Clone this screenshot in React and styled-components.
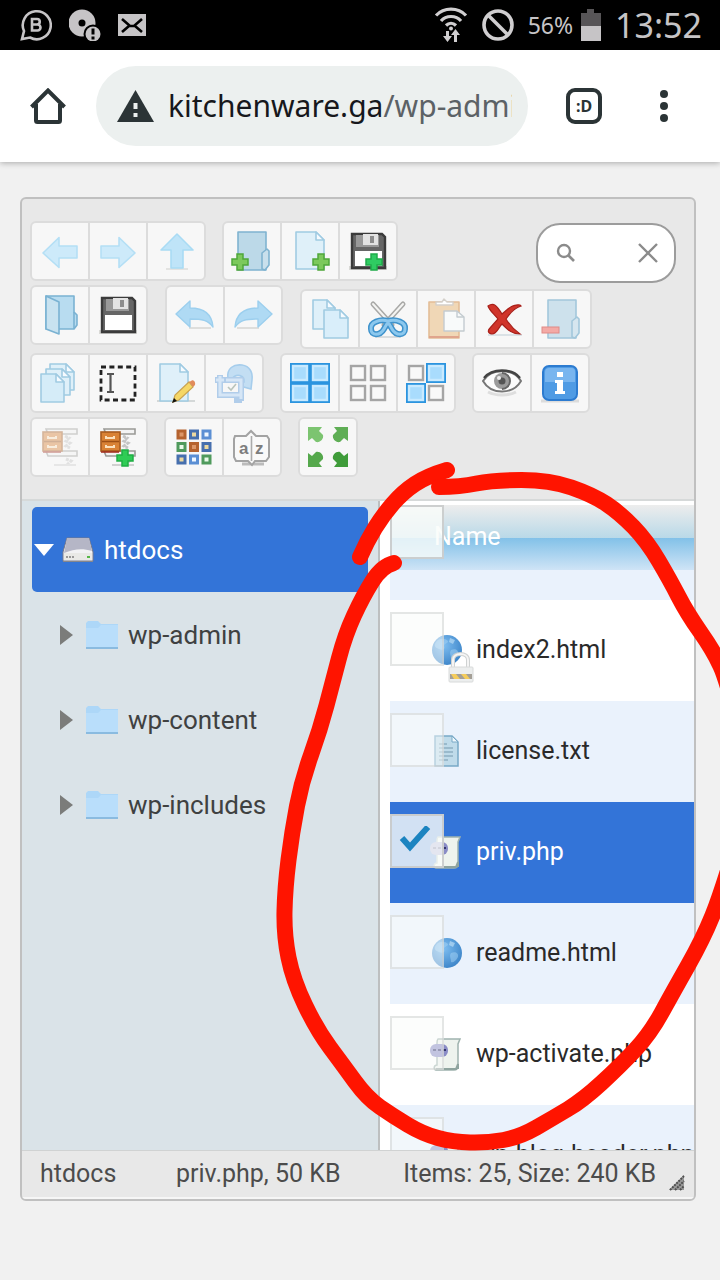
import React, { useState } from "react";
import styled, { createGlobalStyle } from "styled-components";

const GlobalStyle = createGlobalStyle`
  *, *::before, *::after { box-sizing: border-box; }
  html, body { margin: 0; padding: 0; }
  body { background: #f1f1f1; font-family: Roboto, "Liberation Sans", sans-serif; }
  button, input { font: inherit; margin: 0; padding: 0; }
`;

/* ---------- page shell ---------- */

const Screen = styled.div`
  display: flex;
  flex-direction: column;
  height: 100vh;
  overflow: hidden;
  position: relative;
`;

const StatusBar = styled.div`
  flex: none;
  display: flex;
  align-items: center;
  gap: 16px;
  height: 50px;
  padding: 0 18px 0 20px;
  background: #000;
  color: #c6c4c6;
  font-family: "Noto Sans", Roboto, sans-serif;
  svg { display: block; flex: none; }
`;

const StatusSide = styled.div`
  display: flex;
  align-items: center;
  gap: ${(p) => p.$gap}px;
  margin-left: ${(p) => (p.$end ? "auto" : "0")};
`;

const Percent = styled.span`
  font-size: 23px;
  line-height: 50px;
  margin-right: -6px;
`;

const Clock = styled.time`
  font-size: 34px;
  line-height: 50px;
`;

const BrowserBar = styled.header`
  flex: none;
  display: flex;
  align-items: center;
  height: 112px;
  padding: 0 32px 0 24px;
  background: #fff;
  box-shadow: 0 1px 6px rgba(0, 0, 0, 0.3);
  position: relative;
`;

const BarButton = styled.button`
  flex: none;
  display: grid;
  place-items: center;
  width: 48px;
  height: 80px;
  border: 0;
  background: none;
  color: #2b3436;
`;

const Address = styled.button`
  flex: 1;
  min-width: 0;
  display: flex;
  align-items: center;
  gap: 14px;
  height: 80px;
  margin: 0 32px 0 24px;
  padding: 0 16px 0 21px;
  border: 0;
  border-radius: 40px;
  background: #ecf0ef;
  color: #17181c;
  text-align: left;
  svg { flex: none; }
`;

const Url = styled.span`
  flex: 1;
  min-width: 0;
  overflow: hidden;
  white-space: nowrap;
  font-family: "Noto Sans", Roboto, sans-serif;
  font-size: 30px;
  line-height: 48px;
`;

const UrlPath = styled.span`
  color: #5c6266;
`;

const TabCount = styled.span`
  display: grid;
  place-items: center;
  width: 36px;
  height: 36px;
  border: 4px solid #2b3436;
  border-radius: 9px;
  font-family: "Noto Sans", sans-serif;
  font-size: 16px;
  font-weight: 700;
  line-height: 20px;
`;

const MenuButton = styled(BarButton)`
  margin-left: 32px;
`;

const Page = styled.main`
  flex: 1;
  min-height: 0;
  display: flex;
  padding: 35px 24px 79px 20px;
  background: #f1f1f1;
`;

/* ---------- file manager ---------- */

const Manager = styled.section`
  flex: 1;
  min-width: 0;
  display: flex;
  flex-direction: column;
  border: 2px solid #c0c0c0;
  border-radius: 6px;
  background: #e8e8e8;
  overflow: hidden;
`;

const Toolbar = styled.div`
  flex: none;
  display: flex;
  flex-direction: column;
  gap: 4px;
  padding: 22px 18px 22px 8px;
  border-bottom: 2px solid #d6d9d9;
`;

const ToolRow = styled.div`
  display: flex;
  align-items: flex-start;
  gap: ${(p) => p.$gap || 16}px;
`;

const ToolGroup = styled.div`
  display: flex;
  gap: 2px;
  border: 2px solid #dcdcdc;
  border-radius: 6px;
  background: #dcdcdc;
  overflow: hidden;
  margin-top: ${(p) => (p.$low ? 4 : 0)}px;
`;

const ToolButton = styled.button`
  display: grid;
  place-items: center;
  width: 56px;
  height: 56px;
  border: 0;
  background: #f7f7f7;
  svg { display: block; overflow: visible; }
`;

const SearchBox = styled.label`
  display: flex;
  align-items: center;
  width: 140px;
  height: 60px;
  margin: 2px 0 -2px auto;
  padding: 0 14px 0 18px;
  border: 2px solid #9c9c9c;
  border-radius: 24px;
  background: #fff;
`;

const SearchInput = styled.input`
  flex: 1;
  min-width: 0;
  border: 0;
  outline: 0;
  background: none;
  font-size: 26px;
`;

const ClearButton = styled.button`
  flex: none;
  display: grid;
  place-items: center;
  width: 24px;
  height: 24px;
  border: 0;
  background: none;
`;

const WorkZone = styled.div`
  flex: 1;
  min-height: 0;
  display: grid;
  grid-template-columns: minmax(0, 358fr) minmax(0, 314fr);
`;

const Tree = styled.nav`
  padding: 6px 10px;
  border-right: 2px solid #bdbfc0;
  background: #dae3e8;
  overflow: hidden;
`;

const TreeItem = styled.a`
  display: flex;
  align-items: center;
  height: 85px;
  padding-left: ${(p) => (p.$root ? 1 : 26)}px;
  border-radius: 5px;
  background: ${(p) => (p.$root ? "#3374d8" : "transparent")};
  color: ${(p) => (p.$root ? "#fff" : "#3f4141")};
  font-size: 26px;
  line-height: 32px;
  text-decoration: none;
  svg { flex: none; }
`;

const Twisty = styled.svg`
  margin-right: ${(p) => p.$space}px;
`;

const TreeName = styled.span`
  margin-left: 10px;
`;

const FilePane = styled.div`
  min-width: 0;
  padding: 4px 0 0 10px;
  background: #fff;
  overflow: hidden;
`;

const FileTable = styled.table`
  width: 100%;
  table-layout: fixed;
  border-collapse: collapse;
  font-size: 25px;
  line-height: 32px;
`;

const HeadCell = styled.th`
  position: relative;
  height: 95px;
  padding: 0;
  vertical-align: top;
  background: #eaf2fc;
  color: #fff;
  font-weight: 400;
  text-align: left;
`;

const HeadBand = styled.div`
  height: 65px;
  padding: 16px 0 0 44px;
  background: linear-gradient(#ededed 0, #b9d9e8 33px, #82c1e8 33px, #cfe4f6 65px);
`;

const FileRow = styled.tr`
  background: ${(p) => (p.$selected ? "#3374d8" : p.$striped ? "#eaf2fc" : "#fff")};
  color: ${(p) => (p.$selected ? "#fff" : "#2a2a2a")};
`;

const FileCell = styled.td`
  position: relative;
  height: 101px;
  padding: 0;
`;

const FileEntry = styled.div`
  display: flex;
  align-items: center;
  gap: 14px;
  padding: 0 0 2px 40px;
  white-space: nowrap;
  svg { flex: none; overflow: visible; }
`;

const Tick = styled.label`
  position: absolute;
  left: 0;
  top: ${(p) => (p.$head ? 0 : 12)}px;
  display: grid;
  place-items: center;
  width: 54px;
  height: 54px;
  svg { grid-area: 1 / 1; pointer-events: none; }
`;

const TickInput = styled.input`
  appearance: none;
  grid-area: 1 / 1;
  width: 54px;
  height: 54px;
  border: 2px solid rgba(200, 202, 202, ${(p) => (p.$strong ? 0.9 : 0.45)});
  background: rgba(250, 252, 250, ${(p) => (p.$strong ? 0.8 : 0.5)});
`;

const Footer = styled.footer`
  flex: none;
  display: flex;
  align-items: center;
  gap: 12px;
  height: 49px;
  padding: 0 8px 0 18px;
  border-top: 1px solid #d0d2d2;
  border-bottom: 2px solid #f6f6f6;
  color: #4c4c4c;
  font-size: 25px;
  line-height: 32px;
  white-space: nowrap;
`;

const FootPath = styled.span`
  width: 124px;
`;

const FootSelection = styled.span`
  flex: 1;
`;

const Grip = styled.svg`
  align-self: flex-end;
  margin-bottom: 6px;
`;

const Annotation = styled.svg`
  position: absolute;
  inset: 0;
  width: 100%;
  height: 100%;
  pointer-events: none;
`;

/* ---------- pictograms, drawn on a 40 x 40 grid ---------- */

const Plus = ({ x, y, c = "#7cc95c", s = "#4fa73a" }) => (
  <path
    d={`M${x - 3} ${y - 8}h6v5h5v6h-5v5h-6v-5h-5v-6h5z`}
    fill={c}
    stroke={s}
    strokeWidth="1.5"
  />
);

const Sheet = ({ x = 5, y = 0, w = 30, h = 39, f = "#dff0f9" }) => (
  <g stroke="#a0cbe2" strokeWidth="1.6" strokeLinejoin="round">
    <path d={`M${x + 1} ${y + 1}h${w - 10}l8 8v${h - 10}h-${w - 2}z`} fill={f} />
    <path d={`M${x + w - 9} ${y + 1}v8h8z`} fill="#f6fbff" />
  </g>
);

const FolderBack = () => (
  <g stroke="#7fb3d0" strokeWidth="1.6" strokeLinejoin="round">
    <path d="M6 1h28v38H6z" fill="#bcd9e8" />
    <path d="M30 38V22l5-4 2 2v14l-4 5z" fill="#c9e0ec" />
  </g>
);

const Floppy = () => (
  <g>
    <rect x="1" y="35" width="38" height="4" fill="#d9d9d6" />
    <path d="M4 3h30l3 3v31H4z" fill="#666" stroke="#3b3b3b" strokeWidth="2.4" />
    <rect x="8" y="4" width="23" height="12" fill="#999" />
    <path d="M15 3h15v11H15z" fill="#e3e3e3" />
    <path d="M22 5h4v7h-4z" fill="#8d8d8d" />
    <path d="M7 20h27v15H7z" fill="#fff" />
  </g>
);

const Cabinet = () => (
  <g>
    <path d="M6 2h31v5H8zM6 24h31v5H8z" fill="#f3f3f3" stroke="#9a9a97" strokeWidth="1.6" />
    <path d="M25 9l4 2-3 3 4 2-4 3 4 2M26 32l5 2-4 4" fill="none" stroke="#c4c4c4" strokeWidth="3" strokeDasharray="3 1" />
    <path d="M14 38h22" stroke="#d0d0d0" strokeWidth="2" />
    <rect x="3" y="5" width="19" height="19" fill="#d98235" stroke="#a75a1e" strokeWidth="1.6" />
    <path d="M4 14.500h17" stroke="#9c4f16" strokeWidth="1.6" />
    <path d="M8 9v2h8V9M8 18v2h8v-2" fill="none" stroke="#fbe0bd" strokeWidth="2" />
    <path d="M3 25h18" stroke="#a02818" strokeWidth="1.6" />
  </g>
);

const Tile = ({ x, y, on }) => (
  <g>
    {on && <rect x={x} y={y} width="20" height="20" fill="#2b94df" />}
    <rect
      x={x + 3}
      y={y + 3}
      width="14"
      height="14"
      fill={on ? "#a9dcfd" : "#f9f9f9"}
      stroke={on ? "#c9eaff" : "#a5a5a5"}
      strokeWidth="2.4"
    />
  </g>
);

const gridColors = [
  ["#b5632f", "#dd9768"], ["#466fae", "#ecd9a0"], ["#5b8fd4", "#f0f8ff"],
  ["#4f9a5c", "#eafaea"], ["#b5632f", "#dd9768"], ["#466fae", "#ecd9a0"],
  ["#466fae", "#ecd9a0"], ["#5b8fd4", "#f0f8ff"], ["#4f9a5c", "#eafaea"],
];

const art = {
  back: <path d="M3 22L19 6.500V15h18v12H19v9.500z" fill="#cdeafa" stroke="#b4dff5" strokeWidth="1.6" strokeLinejoin="round" />,
  forward: <path d="M37 22L21 6.500V15H3v12h18v9.500z" fill="#cdeafa" stroke="#b4dff5" strokeWidth="1.6" strokeLinejoin="round" />,
  up: (
    <g>
      <path d="M10 38h22" stroke="#e3e3e1" strokeWidth="2" />
      <path d="M21 3l16 16H27v18H15V19H5z" fill="#bfe4f8" stroke="#a9dbf4" strokeWidth="1.6" strokeLinejoin="round" />
    </g>
  ),
  mkdir: <g><FolderBack /><Plus x={8} y={31} /></g>,
  mkfile: <g><Sheet /><Plus x={31} y={31} /></g>,
  saveas: <g><Floppy /><Plus x={26} y={31} c="#2fcc62" s="#1faa4a" /></g>,
  save: <Floppy />,
  open: (
    <g stroke="#7ab2d2" strokeWidth="1.6" strokeLinejoin="round">
      <path d="M6 1h28v16l3 3v10l-3 4H6z" fill="#b8dcf0" />
      <path d="M6 1l13 6v32L6 34z" fill="#c8e2f0" />
      <path d="M34 17v17" fill="none" />
    </g>
  ),
  undo: (
    <g>
      <path d="M14 33h22" stroke="#dededc" strokeWidth="2" />
      <path d="M1 19L15 6v7c14 0 22 6 23 19-5-7-11-8-23-8v8z" fill="#afdaf4" stroke="#9ccfee" strokeWidth="1.4" strokeLinejoin="round" />
    </g>
  ),
  redo: (
    <g>
      <path d="M4 33h22" stroke="#dededc" strokeWidth="2" />
      <path d="M39 19L25 6v7C11 13 3 19 2 32c5-7 11-8 23-8v8z" fill="#afdaf4" stroke="#9ccfee" strokeWidth="1.4" strokeLinejoin="round" />
    </g>
  ),
  copy: <g><Sheet x={2} y={0} w={24} h={31} /><Sheet x={13} y={10} w={26} h={30} f="#d9eefa" /></g>,
  cut: (
    <g fill="none" strokeLinecap="round">
      <path d="M5 5l19 21M35 5L16 26" stroke="#a9a9a7" strokeWidth="5" />
      <path d="M5 5l19 21M35 5L16 26" stroke="#f4f4f2" strokeWidth="2" />
      <path d="M8 38h24" stroke="#d8dcde" strokeWidth="2" />
      <path d="M20 22C12 20 2 23 3 30c0 7 9 7 13 0l4-7M20 22c8-2 18 1 17 8 0 7-9 7-13 0l-4-7" stroke="#3f93cc" strokeWidth="6" />
      <path d="M20 22C12 20 2 23 3 30c0 7 9 7 13 0l4-7M20 22c8-2 18 1 17 8 0 7-9 7-13 0l-4-7" stroke="#8cc8ee" strokeWidth="3" />
    </g>
  ),
  paste: (
    <g strokeLinejoin="round">
      <path d="M3 3h30v36H3z" fill="#f0d7b6" stroke="#e3bd97" strokeWidth="1.6" />
      <path d="M3 38h30" stroke="#e0a58d" strokeWidth="2" />
      <path d="M10 6V3h6l2-3 3 3h6v3z" fill="#fff" stroke="#d4d0ca" strokeWidth="1.4" />
      <path d="M18 12h13l7 6v14H18z" fill="#f8fafa" stroke="#c3cbd0" strokeWidth="1.4" />
      <path d="M31 12v6h7" fill="none" stroke="#c3cbd0" strokeWidth="1.4" />
    </g>
  ),
  remove: (
    <g>
      <path d="M4 36h34" stroke="#dbe2e6" strokeWidth="2" />
      <path d="M4 7c6-4 9 0 14 8C24 10 28 5 36 6l1 1C30 9 26 14 22 20c3 5 7 10 14 15-8 0-12-4-18-10-4 4-5 10-10 10-5-1-4-4-2-6l8-9C10 15 5 11 4 7z" fill="#d0342a" stroke="#a8201a" strokeWidth="1.2" />
    </g>
  ),
  empty: (
    <g>
      <g opacity=".7"><FolderBack /></g>
      <rect x="0" y="28" width="17" height="6" fill="#f3aaa6" stroke="#e08a86" />
    </g>
  ),
  duplicate: <g><Sheet x={9} y={0} w={26} h={28} /><Sheet x={5} y={5} w={26} h={28} /><Sheet x={0} y={10} w={25} h={30} f="#d5ecf8" /></g>,
  rename: (
    <g fill="none" stroke="#222">
      <rect x="3" y="4" width="34" height="33" strokeWidth="2.8" strokeDasharray="5 3.400" />
      <path d="M9 11h7M9 29h7M12.500 11v18" stroke="#555" strokeWidth="2.2" />
    </g>
  ),
  edit: (
    <g>
      <path d="M1 38h38" stroke="#d4d8d8" strokeWidth="2" />
      <Sheet x={3} w={30} />
      <path d="M17 39l2-7 14-13 4 5-14 13z" fill="#f5d766" stroke="#c9a352" strokeWidth="1.2" />
      <path d="M33 19l4 5 2-2c1-3-2-6-4-4z" fill="#e18b5b" />
      <path d="M16 40l2-5 3 3z" fill="#111" />
    </g>
  ),
  resize: (
    <g fill="none">
      <path d="M14 16C12 5 20 1 28 2c8 1 11 8 10 15l-1 9-11-3 4-4c1-7-8-9-12-3z" fill="#c3def3" stroke="#a6cdec" strokeWidth="1.6" />
      <path d="M1 17h10M6 12v20h24M11 17h16v21M20 37h8" stroke="#b1cdea" strokeWidth="6" />
      <path d="M2 17h8M6 13v19h22M12 17h15v19" stroke="#d6e6f6" strokeWidth="3" />
      <path d="M14 24l3 3 5-6" stroke="#b9c4bc" strokeWidth="1.6" />
    </g>
  ),
  selectall: <g><Tile x={0} y={0} on /><Tile x={20} y={0} on /><Tile x={0} y={20} on /><Tile x={20} y={20} on /></g>,
  selectnone: <g><Tile x={0} y={0} /><Tile x={20} y={0} /><Tile x={0} y={20} /><Tile x={20} y={20} /></g>,
  invert: <g><Tile x={0} y={0} /><Tile x={20} y={0} on /><Tile x={0} y={20} on /><Tile x={20} y={20} /></g>,
  preview: (
    <g>
      <path d="M6 29c8 4 20 4 28 0" fill="none" stroke="#dedede" strokeWidth="3" />
      <path d="M1 18C9 5 31 5 39 18c-8 14-30 14-38 0z" fill="#fcfcfc" stroke="#777" strokeWidth="2" />
      <path d="M2 15C10 5 30 5 38 15" fill="none" stroke="#444" strokeWidth="2.4" />
      <circle cx="20" cy="18" r="8" fill="#9b9b9b" />
      <path d="M20 10a8 8 0 0 1 0 16" fill="none" stroke="#666" strokeWidth="2" />
      <circle cx="20" cy="18" r="3.500" fill="#555" />
      <circle cx="17" cy="15" r="2" fill="#eee" />
    </g>
  ),
  info: (
    <g>
      <path d="M1 38h38" stroke="#dcdcdc" strokeWidth="3" />
      <rect x="3" y="3" width="34" height="34" rx="6" fill="#4f9be4" stroke="#2c7bd0" strokeWidth="2" />
      <path d="M5 9c0-3 2-4 4-4h22c3 0 4 1 4 4v10H5z" fill="#78b5ef" />
      <path d="M17 9h6v5h-6zM15 17h8v11h2v3H15v-3h2v-8h-2z" fill="#fff" />
    </g>
  ),
  extract: <g opacity=".42"><Cabinet /></g>,
  archive: <g><Cabinet /><Plus x={27} y={31} c="#2fcc55" s="#1fae44" /></g>,
  icons: (
    <g>
      {gridColors.map(([edge, core], i) => (
        <rect key={i} x={4 + (i % 3) * 12.5} y={4 + Math.floor(i / 3) * 12.5} width="7" height="7" fill={core} stroke={edge} strokeWidth="3" />
      ))}
    </g>
  ),
  sort: (
    <g>
      <path d="M10 37h22" stroke="#bbb" strokeWidth="3" />
      <path d="M3 9h11l5-5 5 5h11l2 3v18l-3 4H23l-3 4-4-4H4l-2-4V12z" fill="#f9f9f9" stroke="#a3a3a3" strokeWidth="2" />
      <path d="M19.500 9v25" stroke="#aaa" strokeWidth="1.600" />
      <text x="7" y="27" fontFamily="Liberation Sans, sans-serif" fontWeight="700" fontSize="17" fill="#7d7d7d">a</text>
      <text x="23" y="27" fontFamily="Liberation Sans, sans-serif" fontWeight="700" fontSize="17" fill="#7d7d7d">z</text>
    </g>
  ),
  fullscreen: (
    <g>
      <path d="M0 0h14l-3 4 4 4c1 4-3 8-7 7l-4-4-4 3z" fill="#7cc470" />
      <path d="M40 0H26l3 4-4 4c-1 4 3 8 7 7l4-4 4 3z" fill="#5fae55" />
      <path d="M0 40h14l-3-4 4-4c1-4-3-8-7-7l-4 4-4-3z" fill="#55a84c" />
      <path d="M40 40H26l3-4-4-4c-1-4 3-8 7-7l4 4 4-3z" fill="#3f9c3a" />
    </g>
  ),
};

const Tool = ({ name }) => (
  <ToolButton type="button" aria-label={name}>
    <svg width="40" height="40" viewBox="0 0 40 40" aria-hidden="true">{art[name]}</svg>
  </ToolButton>
);

const toolRows = [
  [["back", "forward", "up"], ["mkdir", "mkfile", "saveas"]],
  [["open", "save"], ["undo", "redo"], ["copy", "cut", "paste", "remove", "empty"]],
  [["duplicate", "rename", "edit", "resize"], ["selectall", "selectnone", "invert"], ["preview", "info"]],
  [["extract", "archive"], ["icons", "sort"], ["fullscreen"]],
];

/* ---------- file icons, drawn on a 32 x 32 grid ---------- */

const Globe = () => (
  <g>
    <circle cx="17" cy="16" r="15" fill="url(#sea)" />
    <path d="M6 8c3-4 9-4 12-1 0 3-4 2-4 5 2 3-2 5-5 3-3-1-6-3-3-7zM21 16c4-2 8 0 7 4-2 4-5 6-7 5 0-4-2-6 0-9z" fill="#a6d4f5" opacity=".5" />
    <path d="M20 4l5 2-2 4-4-2z" fill="#c7e4f8" opacity=".6" />
  </g>
);

const fileArt = {
  html: <Globe />,
  locked: (
    <g>
      <Globe />
      <path d="M23 34v-8c0-8 15-8 15 0v8" fill="none" stroke="#cfd2d2" strokeWidth="4" />
      <path d="M23 34v-8c0-8 15-8 15 0v8" fill="none" stroke="#f5f5f5" strokeWidth="2" />
      <rect x="19" y="33" width="24" height="15" rx="1" fill="#eceeee" stroke="#d8dada" />
      <path d="M20 40h22v5H20z" fill="#a49f96" />
      <path d="M21 40h5l4 5h-6zM31 40h5l4 5h-5z" fill="#f5cc5a" />
    </g>
  ),
  text: (
    <g>
      <path d="M5 1h17l6 6v24H5z" fill="#bfdbea" stroke="#78a9c6" strokeWidth="1.500" />
      <path d="M22 1v6h6z" fill="#eff8fd" stroke="#78a9c6" />
      <path d="M9 9h8M9 13h14M9 17h14M9 21h14M9 25h9" stroke="#8fb0c2" strokeWidth="1.500" />
    </g>
  ),
  php: (
    <g>
      <path d="M8 1h22l-2 5v22c0 3-2 4-4 4H6c-3-1-2-5 1-5V5c0-2 0-3 1-4z" fill="#eef3ee" stroke="#9fb3ae" strokeWidth="1.500" />
      <path d="M6 31h20l2-5v5" fill="none" stroke="#8fa49f" strokeWidth="2" />
      <rect x="0" y="6" width="18" height="13" rx="6" fill="#8a8cc6" />
      <path d="M3 12h3M8 12h3M13 12h3" stroke="#34366e" strokeWidth="2" />
    </g>
  ),
};

const initialFiles = [
  { name: "index2.html", kind: "locked" },
  { name: "license.txt", kind: "text" },
  { name: "priv.php", kind: "php", selected: true },
  { name: "readme.html", kind: "html" },
  { name: "wp-activate.php", kind: "php" },
  { name: "wp-blog-header.php", kind: "php" },
];

const FolderIcon = () => (
  <svg width="32" height="32" viewBox="0 0 32 32" aria-hidden="true">
    <path d="M0 4l2-2h10l3 3h17v25H0z" fill="#add7f8" />
    <path d="M0 9h12l3-3h17v22H0z" fill="#b9defb" />
    <path d="M0 29h32" stroke="#7fb2d8" strokeWidth="1.500" />
  </svg>
);

const DriveIcon = () => (
  <svg width="32" height="28" viewBox="0 0 32 28" aria-hidden="true">
    <path d="M5 2h22l4 14v9H1v-9z" fill="#f2f2f4" stroke="#76788a" />
    <path d="M5 2h22l3 13c-10-3-18-2-28 2z" fill="#b5b6c6" />
    <path d="M2 17h28v7H2z" fill="#e9e9e6" />
    <path d="M4 21h9" stroke="#999" strokeWidth="2" strokeDasharray="2 1" />
    <path d="M25 21h3" stroke="#56b748" strokeWidth="2" />
    <path d="M1 25.500h30" stroke="#85868c" />
  </svg>
);

/* ---------- hand-drawn marker line ---------- */

const markerStrokes = [
  [[447, 470], [427, 476], [403, 492], [383, 515], [367, 541], [360, 557]],
  [
    [439, 487], [460, 487], [493, 480], [550, 480], [593, 495], [620, 513], [647, 541],
    [670, 580], [687, 613], [713, 650], [728, 682], [752, 790], [722, 892], [703, 939],
    [673, 992], [650, 1034], [620, 1066], [583, 1100], [553, 1118], [520, 1137], [487, 1143],
    [453, 1142], [423, 1134], [393, 1116], [367, 1098], [343, 1065], [317, 1030], [293, 980],
    [284, 935], [285, 888], [292, 832], [302, 780], [320, 730], [333, 681], [345, 635],
    [363, 596], [382, 566], [394, 563],
  ],
];

/* Rounds a list of points into a curve through the midpoints of its segments. */
const smooth = (pts) => {
  const mids = pts.slice(1, -2).map((p, i) => {
    const n = pts[i + 2];
    return `Q${p[0]} ${p[1]} ${(p[0] + n[0]) / 2} ${(p[1] + n[1]) / 2}`;
  });
  const [c, e] = pts.slice(-2);
  return `M${pts[0].join(" ")}${mids.join("")}Q${c.join(" ")} ${e.join(" ")}`;
};

function PhoneStatus() {
  return (
    <StatusBar>
      <StatusSide $gap={17}>
        <svg width="32" height="32" viewBox="0 0 32 32" fill="none" aria-hidden="true">
          <path d="M2 30l2-8A14 14 0 1 1 10 28.500z" stroke="#c6c4c6" strokeWidth="2.600" />
          <path d="M12 10h5a2.700 2.700 0 0 1 0 5.500H12zM12 15.500h5.500a3 3 0 0 1 0 6H12z" stroke="#c6c4c6" strokeWidth="2.600" />
        </svg>
        <svg width="32" height="32" viewBox="0 0 32 32" aria-hidden="true">
          <circle cx="13" cy="14" r="13.500" fill="#c6c4c6" />
          <circle cx="13" cy="14" r="3.500" fill="#000" />
          <circle cx="24" cy="25" r="9.500" fill="#000" />
          <circle cx="24" cy="25" r="7.500" fill="#c6c4c6" />
          <path d="M24 19.500v6M24 27.500v3" stroke="#000" strokeWidth="3" />
        </svg>
        <svg width="28" height="22" viewBox="0 0 28 22" fill="none" aria-hidden="true">
          <rect width="28" height="22" fill="#c6c4c6" />
          <path d="M4 5l8 7h4l8-7M4 18l7-6M24 18l-7-6" stroke="#000" strokeWidth="2.600" />
        </svg>
      </StatusSide>
      <StatusSide $end $gap={14}>
        <svg width="34" height="36" viewBox="0 0 34 36" fill="none" stroke="#d0ced0" aria-hidden="true">
          <path d="M2 8.500C10 0 24 0 32 8.500M7 14c5-6 15-6 20 0M12 18.500c3-3 7-3 10 0" strokeWidth="3.200" />
          <circle cx="17" cy="21.500" r="2" fill="#d0ced0" stroke="none" />
          <path d="M13.500 24v6M21.500 28v7" strokeWidth="3" />
          <path d="M9 29h9l-4.500 6zM17 28h9l-4.500-6z" fill="#d0ced0" stroke="none" />
        </svg>
        <svg width="32" height="32" viewBox="0 0 32 32" fill="none" stroke="#d0ced0" strokeWidth="3.600" aria-hidden="true">
          <circle cx="16" cy="16" r="14" />
          <path d="M6 6l20 20" />
        </svg>
        <Percent>56%</Percent>
        <svg width="20" height="32" viewBox="0 0 20 32" aria-hidden="true">
          <path d="M6 0h7v4h7v28H0V4h6z" fill="#575557" />
          <path d="M0 17h20v15H0z" fill="#c6c4c6" />
        </svg>
        <Clock>13:52</Clock>
      </StatusSide>
    </StatusBar>
  );
}

function Browser() {
  return (
    <BrowserBar>
      <BarButton type="button" aria-label="Home">
        <svg width="36" height="36" viewBox="0 0 36 36" fill="none" aria-hidden="true">
          <path d="M1.500 19L18 2.500 34.500 19" stroke="#2b3436" strokeWidth="4" />
          <path d="M6 16v16.500q0 1.500 1.500 1.500h21q1.500 0 1.500-1.500V16" stroke="#2b3436" strokeWidth="4" />
        </svg>
      </BarButton>
      <Address type="button">
        <svg width="37" height="32" viewBox="0 0 37 32" aria-hidden="true">
          <path d="M18.500 0L37 32H0z" fill="#2b3436" />
          <path d="M16.500 13h4v6h-4zM16.500 23h4v4h-4z" fill="#ecf0ef" />
        </svg>
        <Url>kitchenware.ga<UrlPath>/wp-admin</UrlPath></Url>
      </Address>
      <BarButton type="button" aria-label="Tabs"><TabCount>:D</TabCount></BarButton>
      <MenuButton type="button" aria-label="Menu">
        <svg width="8" height="32" viewBox="0 0 8 32" fill="#2b3436" aria-hidden="true">
          <circle cx="4" cy="4" r="4" /><circle cx="4" cy="16" r="4" /><circle cx="4" cy="28" r="4" />
        </svg>
      </MenuButton>
    </BrowserBar>
  );
}

export default function App() {
  const [files, setFiles] = useState(initialFiles);
  const toggle = (name) =>
    setFiles((list) => list.map((f) => (f.name === name ? { ...f, selected: !f.selected } : f)));

  return (
    <Screen>
      <GlobalStyle />
      <PhoneStatus />
      <Browser />
      <Page>
        <Manager>
          <Toolbar role="toolbar">
            {toolRows.map((groups, r) => (
              <ToolRow key={r} $gap={r === 1 ? 17 : 16}>
                {groups.map((tools, g) => (
                  <ToolGroup key={g} $low={r === 1 && g === 2}>
                    {tools.map((t) => <Tool key={t} name={t} />)}
                  </ToolGroup>
                ))}
                {r === 0 && (
                  <SearchBox>
                    <svg width="20" height="20" viewBox="0 0 20 20" fill="none" stroke="#8b8b8b" aria-hidden="true">
                      <circle cx="8" cy="8" r="6" strokeWidth="2.400" />
                      <path d="M12 12l6 6" strokeWidth="2.600" />
                    </svg>
                    <SearchInput type="text" aria-label="Search" />
                    <ClearButton type="button" aria-label="Clear search">
                      <svg width="20" height="20" viewBox="0 0 20 20" stroke="#8b8b8b" strokeWidth="2.400" aria-hidden="true">
                        <path d="M1 1l18 18M19 1L1 19" />
                      </svg>
                    </ClearButton>
                  </SearchBox>
                )}
              </ToolRow>
            ))}
          </Toolbar>

          <WorkZone>
            <Tree>
              <TreeItem href="#htdocs" $root>
                <Twisty $space={7} width="22" height="12" viewBox="0 0 22 12" aria-hidden="true">
                  <path d="M1 0h20L11 12z" fill="#fff" />
                </Twisty>
                <DriveIcon />
                <TreeName>htdocs</TreeName>
              </TreeItem>
              {["wp-admin", "wp-content", "wp-includes"].map((dir) => (
                <TreeItem key={dir} href={`#${dir}`}>
                  <Twisty $space={12} width="16" height="20" viewBox="0 0 16 20" aria-hidden="true">
                    <path d="M2 0l13 10L2 20z" fill="#7b7c7a" />
                  </Twisty>
                  <FolderIcon />
                  <TreeName>{dir}</TreeName>
                </TreeItem>
              ))}
            </Tree>

            <FilePane>
              <FileTable>
                <thead>
                  <tr>
                    <HeadCell scope="col">
                      <HeadBand>Name</HeadBand>
                      <Tick $head><TickInput type="checkbox" aria-label="Select all files" $strong /></Tick>
                    </HeadCell>
                  </tr>
                </thead>
                <tbody>
                  {files.map((f, i) => (
                    <FileRow key={f.name} $selected={f.selected} $striped={i % 2 === 1}>
                      <FileCell>
                        <FileEntry>
                          <svg width="32" height="32" viewBox="0 0 32 32" aria-hidden="true">{fileArt[f.kind]}</svg>
                          <span>{f.name}</span>
                        </FileEntry>
                        <Tick>
                          <TickInput
                            type="checkbox"
                            aria-label={f.name}
                            checked={!!f.selected}
                            onChange={() => toggle(f.name)}
                            $strong={f.selected}
                          />
                          {f.selected && (
                            <svg width="36" height="30" viewBox="0 0 36 30" fill="none" aria-hidden="true">
                              <path d="M3 12l8 9L29 1" stroke="#1c84c0" strokeWidth="6" />
                            </svg>
                          )}
                        </Tick>
                      </FileCell>
                    </FileRow>
                  ))}
                </tbody>
              </FileTable>
            </FilePane>
          </WorkZone>

          <Footer>
            <FootPath>htdocs</FootPath>
            <FootSelection>priv.php, 50 KB</FootSelection>
            <span>Items: 25, Size: 240 KB</span>
            <Grip width="18" height="16" viewBox="0 0 18 16" aria-hidden="true">
              <path d="M16 0v15H1z" fill="#9a9a9a" />
              <path d="M2 15L16 1M7 15l9-9M12 15l4-4" stroke="#4f4f4f" strokeWidth="2" strokeDasharray="2 1" />
            </Grip>
          </Footer>
        </Manager>
      </Page>

      <Annotation viewBox="0 0 720 1280" preserveAspectRatio="none" aria-hidden="true">
        <defs>
          <radialGradient id="sea" cx=".4" cy=".35" r=".7">
            <stop offset="0" stopColor="#7dbdf0" />
            <stop offset="1" stopColor="#3c84c8" />
          </radialGradient>
        </defs>
        <g fill="none" stroke="#ff1400" strokeWidth="16" strokeLinecap="round" strokeLinejoin="round">
          {markerStrokes.map((pts, i) => <path key={i} d={smooth(pts)} />)}
        </g>
      </Annotation>
    </Screen>
  );
}
